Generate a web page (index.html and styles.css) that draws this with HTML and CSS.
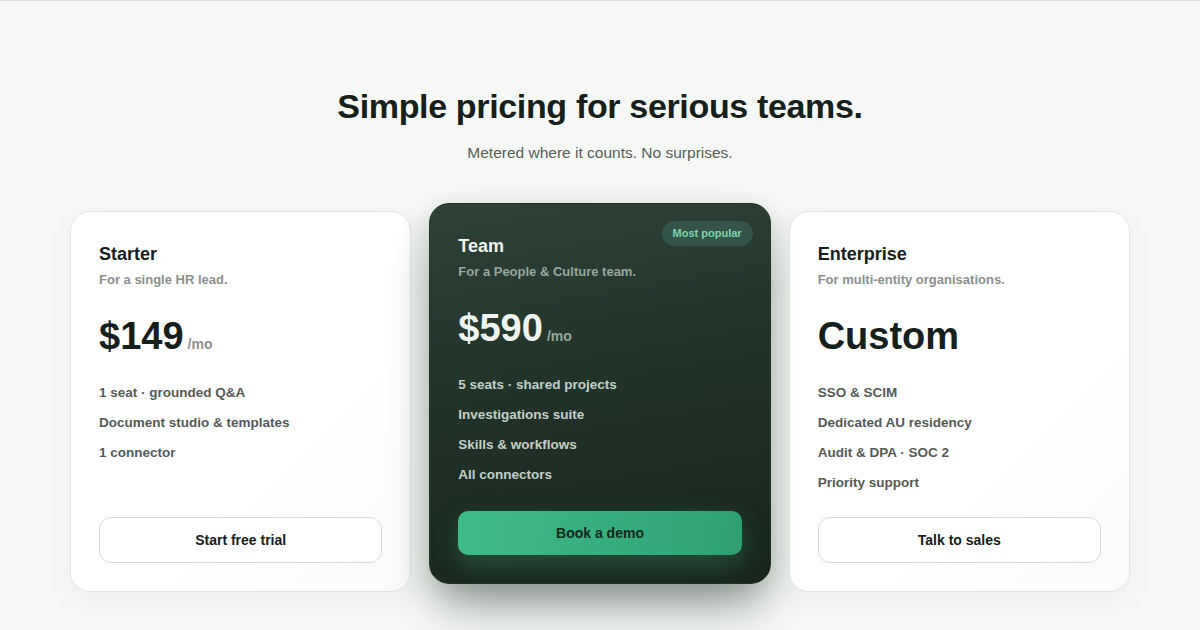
FILE: index.html
```html
<!DOCTYPE html>
<html lang="en">
<head>
    <meta charset="UTF-8">
    <meta name="viewport" content="width=device-width, initial-scale=1.0">
    <title>Pricing</title>
    <link rel="stylesheet" href="styles.css">
</head>
<body>
    <main class="pricing">
        <h1>Simple pricing for serious teams.</h1>
        <p class="lead">Metered where it counts. No surprises.</p>

        <div class="plans">
            <!-- Starter -->
            <div class="plan">
                <h3>Starter</h3>
                <p class="plan-sub">For a single HR lead.</p>
                <div class="price">$149<span>/mo</span></div>
                <ul class="features">
                    <li>1 seat · grounded Q&amp;A</li>
                    <li>Document studio &amp; templates</li>
                    <li>1 connector</li>
                </ul>
                <button class="btn">Start free trial</button>
            </div>

            <!-- Team (highlighted) -->
            <div class="plan plan-featured">
                <span class="badge">Most popular</span>
                <h3>Team</h3>
                <p class="plan-sub">For a People &amp; Culture team.</p>
                <div class="price">$590<span>/mo</span></div>
                <ul class="features">
                    <li>5 seats · shared projects</li>
                    <li>Investigations suite</li>
                    <li>Skills &amp; workflows</li>
                    <li>All connectors</li>
                </ul>
                <button class="btn btn-primary">Book a demo</button>
            </div>

            <!-- Enterprise -->
            <div class="plan">
                <h3>Enterprise</h3>
                <p class="plan-sub">For multi-entity organisations.</p>
                <div class="price">Custom</div>
                <ul class="features">
                    <li>SSO &amp; SCIM</li>
                    <li>Dedicated AU residency</li>
                    <li>Audit &amp; DPA · SOC 2</li>
                    <li>Priority support</li>
                </ul>
                <button class="btn">Talk to sales</button>
            </div>
        </div>
    </main>
</body>
</html>
```

FILE: styles.css
```css
/* General reset */
* {
    box-sizing: border-box;
}

body {
    margin: 0;
    padding: 0;
    font-family: 'Liberation Sans', Arial, sans-serif;
    background-color: #f6f8f5;
    border-top: 1px solid #dde1dd;
    color: #16201b;
    height: 630px;
    overflow: hidden;
}

/* Page header */
.pricing {
    padding-top: 85px;
    text-align: center;
}

h1 {
    margin: 0;
    font-size: 34px;
    line-height: 40px;
    letter-spacing: -0.01em;
    color: #16201b;
}

.lead {
    margin: 16px 0 47px;
    font-size: 15.5px;
    line-height: 22px;
    color: #565e59;
}

/* Plan cards */
.plans {
    display: grid;
    grid-template-columns: repeat(3, 1fr);
    gap: 18px;
    width: 1060px;
    margin: 0 auto;
    text-align: left;
}

.plan {
    position: relative;
    display: flex;
    flex-direction: column;
    padding: 29px 28px 28px;
    background: linear-gradient(135deg, #ffffff 0%, #ffffff 60%, #fafbfa 100%);
    border: 1px solid #e2e6e2;
    border-radius: 20px;
    box-shadow: 0 10px 30px rgba(30, 50, 40, 0.05);
}

.plan h3 {
    margin: 0;
    font-size: 18px;
    line-height: 26px;
}

.plan-sub {
    margin: 3px 0 0;
    font-size: 13px;
    line-height: 20px;
    font-weight: bold;
    color: #8c918e;
}

.price {
    display: flex;
    align-items: baseline;
    gap: 4px;
    margin-top: 24px;
    height: 44px;
    font-size: 38px;
    line-height: 44px;
    font-weight: bold;
    color: #16201b;
}

.price span {
    font-size: 14px;
    line-height: 16px;
    color: #8c918e;
}

.features {
    list-style: none;
    margin: 25px 0 24px;
    padding: 0;
}

.features li {
    font-size: 13.5px;
    line-height: 20px;
    font-weight: bold;
    color: #555a57;
    margin-bottom: 10px;
}

.features li:last-child {
    margin-bottom: 0;
}

/* Buttons */
.btn {
    margin-top: auto;
    width: 100%;
    padding: 13px 0;
    font-family: inherit;
    font-size: 14px;
    line-height: 18px;
    font-weight: bold;
    color: #16201b;
    background-color: #ffffff;
    border: 1px solid #d6dad7;
    border-radius: 12px;
    cursor: pointer;
}

/* Highlighted plan */
.plan-featured {
    transform: translateY(-8px);
    background: linear-gradient(170deg, #2e4238 0%, #22332a 45%, #18251d 100%);
    border-color: #243229;
    box-shadow: 0 30px 50px -12px rgba(25, 45, 35, 0.45), 0 10px 30px rgba(25, 45, 35, 0.18);
}

.plan-featured h3 {
    color: #f1f6f2;
}

.plan-featured .plan-sub,
.plan-featured .price span {
    color: #98a79f;
}

.plan-featured .price {
    color: #eef5f0;
}

.plan-featured .features li {
    color: #c3cfc8;
}

.badge {
    position: absolute;
    top: 17px;
    right: 17px;
    padding: 0 11px;
    height: 25px;
    line-height: 25px;
    font-size: 11px;
    font-weight: bold;
    color: #7fd5ac;
    background-color: #34544a;
    border-radius: 13px;
}

.btn-primary {
    padding: 13px 0;
    border: none;
    border-radius: 10px;
    color: #0f2a1c;
    background: linear-gradient(100deg, #3ebb87 0%, #35ab7c 60%, #2f9f71 100%);
    box-shadow: 0 10px 26px rgba(60, 185, 130, 0.28);
}
```
